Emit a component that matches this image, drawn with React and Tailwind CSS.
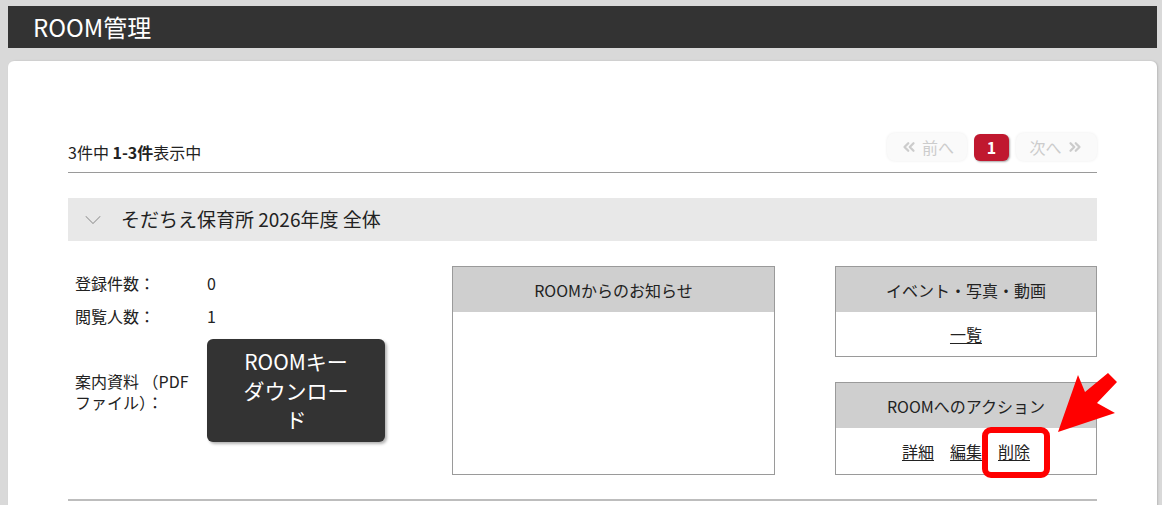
import React from 'react';
import { ChevronDown, ChevronsLeft, ChevronsRight } from 'lucide-react';

const font = { fontFamily: '"Noto Sans CJK JP", "Noto Sans", sans-serif' };

const InfoBox = ({ title, children, className = '' }) => (
  <div className={`border border-[#9a9a9a] bg-white ${className}`}>
    <div className="h-[45px] bg-[#cfcfcf] flex items-center justify-center text-[16px] text-[#222]">
      {title}
    </div>
    {children}
  </div>
);

const App = () => {
  return (
    <div className="relative min-h-[505px] bg-[#d9d9d9] pl-[8px] pr-[5px] pt-[6px] overflow-hidden" style={font}>
      <div className="h-[42px] bg-[#333333] flex items-center pl-[25px]">
        <h1 className="text-white text-[24px]">ROOM管理</h1>
      </div>

      <div className="mt-[13px] bg-white rounded-t-md shadow-[1px_0_2px_rgba(0,0,0,0.15)] pl-[60px] pr-[60px] pt-[72px] pb-[20px] text-[#222]">
        {/* pagination row */}
        <div className="h-[40px] flex items-start justify-between border-b border-[#9a9a9a]">
          <p className="text-[16px] leading-[24px] mt-[7px]">
            3件中 <span className="font-bold">1-3件</span>表示中
          </p>
          <div className="flex items-center gap-[7px]">
            <span className="w-[80px] h-[28px] flex items-center justify-center gap-[4px] rounded-lg bg-[#fafafa] shadow-[0_0_3px_rgba(0,0,0,0.08)] text-[#cccccc] text-[16px]">
              <ChevronsLeft size={18} strokeWidth={3} />
              前へ
            </span>
            <span className="w-[35px] h-[27px] flex items-center justify-center rounded-md bg-[#c0182f] shadow-[1px_1px_2px_rgba(0,0,0,0.35)] text-white font-bold text-[16px]">
              1
            </span>
            <span className="w-[81px] h-[28px] flex items-center justify-center gap-[4px] rounded-lg bg-[#fafafa] shadow-[0_0_3px_rgba(0,0,0,0.08)] text-[#cccccc] text-[16px]">
              次へ
              <ChevronsRight size={18} strokeWidth={3} />
            </span>
          </div>
        </div>

        {/* accordion header */}
        <div className="mt-[25px] h-[43px] bg-[#e8e8e8] flex items-center pl-[11px] gap-[14px]">
          <ChevronDown size={28} strokeWidth={0.9} className="text-[#999]" />
          <span className="text-[19px]">そだちえ保育所 2026年度 全体</span>
        </div>

        {/* content */}
        <div className="mt-[25px] flex">
          <div className="w-[384px] pl-[7px] text-[16px]">
            <div className="h-[33px] flex items-center">
              <span className="w-[132px]">登録件数：</span>
              <span>0</span>
            </div>
            <div className="h-[33px] flex items-center">
              <span className="w-[132px]">閲覧人数：</span>
              <span>1</span>
            </div>
            <div className="mt-[7px] flex items-center">
              <span className="w-[132px] leading-[21px] pr-[4px] pt-[3px]">案内資料 （PDFファイル）：</span>
              <button className="w-[178px] h-[103px] rounded-md bg-[#333333] shadow-[2px_2px_3px_rgba(0,0,0,0.3)] text-white text-[21px] leading-[29px] px-[27px] text-center">
                ROOMキーダウンロード
              </button>
            </div>
          </div>

          <InfoBox title="ROOMからのお知らせ" className="w-[323px] h-[209px]" />

          <div className="ml-[60px] w-[262px] flex flex-col gap-[25px]">
            <InfoBox title="イベント・写真・動画" className="h-[91px]">
              <div className="h-[44px] flex items-center justify-center text-[16px]">
                <a href="#" className="underline underline-offset-2">一覧</a>
              </div>
            </InfoBox>
            <InfoBox title="ROOMへのアクション" className="h-[93px]">
              <div className="h-[46px] flex items-center justify-center gap-[16px] text-[16px]">
                <a href="#" className="underline underline-offset-2">詳細</a>
                <a href="#" className="underline underline-offset-2">編集</a>
                <a href="#" className="underline underline-offset-2">削除</a>
              </div>
            </InfoBox>
          </div>
        </div>

        <div className="mt-[24px] border-b-2 border-[#bdbdbd]" />
      </div>

      {/* annotation overlay */}
      <div className="absolute left-[982px] top-[427px] w-[68px] h-[51px] border-[6px] border-[#ff0000] rounded-[9px]" />
      <svg className="absolute left-0 top-0 pointer-events-none" width="1162" height="505">
        <polygon
          points="1058,432 1078,375 1085,392 1108,373 1117,382 1097,403 1115,413"
          fill="#ff0000"
        />
      </svg>
    </div>
  );
};

export default App;
